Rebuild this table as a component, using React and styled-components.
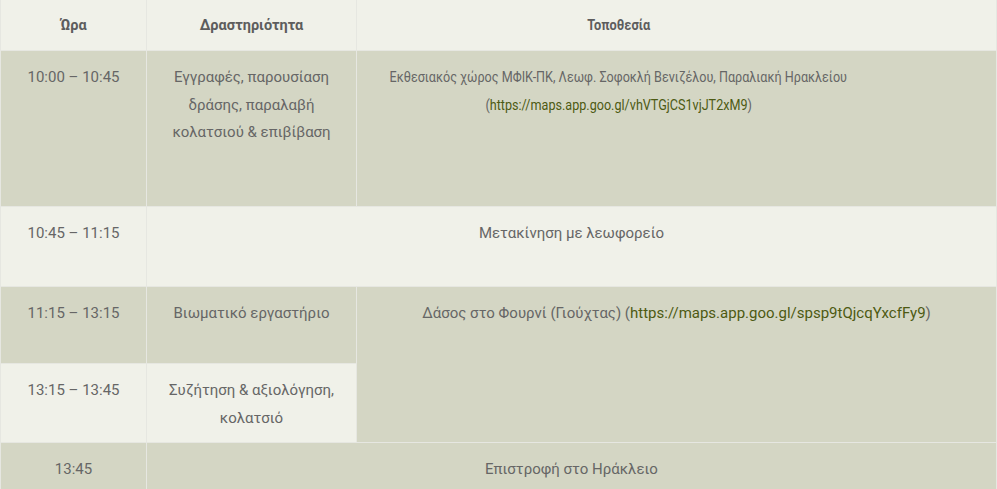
import React from 'react';
import styled, { createGlobalStyle } from 'styled-components';

const GlobalStyle = createGlobalStyle`
  html, body {
    margin: 0;
    padding: 0;
    background: #ffffff;
  }
`;

const Table = styled.table`
  width: 997px;
  border-collapse: collapse;
  table-layout: fixed;
  font-family: Roboto, 'Liberation Sans', sans-serif;
  font-size: 15px;
  color: #666666;
`;

const HeadCell = styled.th`
  height: 50px;
  padding: 0 10px;
  background: #f0f1e9;
  border: 1px solid #e6e7e1;
  border-top: none;
  font-size: 14.5px;
  font-weight: 700;
  color: #5d5d5d;
  text-align: center;
  vertical-align: middle;
`;

const Row = styled.tr`
  height: ${({ h }) => h}px;
  background: ${({ dark }) => (dark ? '#d4d6c4' : '#f0f1e9')};
`;

const Cell = styled.td`
  padding: 13px 12px 0;
  border: 1px solid #e6e7e1;
  text-align: center;
  vertical-align: top;
  line-height: 27.5px;
`;

// the location header and first location cell render in a narrower face,
// drawn a little left of the cell centre
const Narrow = styled.span`
  display: inline-block;
  white-space: nowrap;
  transform: translateX(-58px) scaleX(${({ k }) => k || 0.84});
  transform-origin: center;
`;

const Link = styled.a`
  color: #4d5a12;
  text-decoration: none;
`;

export default function App() {
  return (
    <>
      <GlobalStyle />
      <Table>
        <colgroup>
          <col style={{ width: 146 }} />
          <col style={{ width: 210 }} />
          <col />
        </colgroup>
        <thead>
          <tr>
            <HeadCell>Ώρα</HeadCell>
            <HeadCell>Δραστηριότητα</HeadCell>
            <HeadCell>
              <Narrow k={0.88}>Τοποθεσία</Narrow>
            </HeadCell>
          </tr>
        </thead>
        <tbody>
          <Row dark h={156}>
            <Cell>10:00 – 10:45</Cell>
            <Cell>Εγγραφές, παρουσίαση δράσης, παραλαβή κολατσιού &amp; επιβίβαση</Cell>
            <Cell>
              <Narrow>Εκθεσιακός χώρος ΜΦΙΚ-ΠΚ, Λεωφ. Σοφοκλή Βενιζέλου, Παραλιακή Ηρακλείου</Narrow>
              <br />
              <Narrow>
                (<Link href="#">https://maps.app.goo.gl/vhVTGjCS1vjJT2xM9</Link>)
              </Narrow>
            </Cell>
          </Row>
          <Row h={80}>
            <Cell>10:45 – 11:15</Cell>
            <Cell colSpan={2}>Μετακίνηση με λεωφορείο</Cell>
          </Row>
          <Row dark h={77}>
            <Cell>11:15 – 13:15</Cell>
            <Cell>Βιωματικό εργαστήριο</Cell>
            <Cell rowSpan={2}>
              Δάσος στο Φουρνί (Γιούχτας) (<Link href="#">https://maps.app.goo.gl/spsp9tQjcqYxcfFy9</Link>)
            </Cell>
          </Row>
          <Row h={79}>
            <Cell>13:15 – 13:45</Cell>
            <Cell>Συζήτηση &amp; αξιολόγηση, κολατσιό</Cell>
          </Row>
          <Row dark h={60}>
            <Cell>13:45</Cell>
            <Cell colSpan={2}>Επιστροφή στο Ηράκλειο</Cell>
          </Row>
        </tbody>
      </Table>
    </>
  );
}
